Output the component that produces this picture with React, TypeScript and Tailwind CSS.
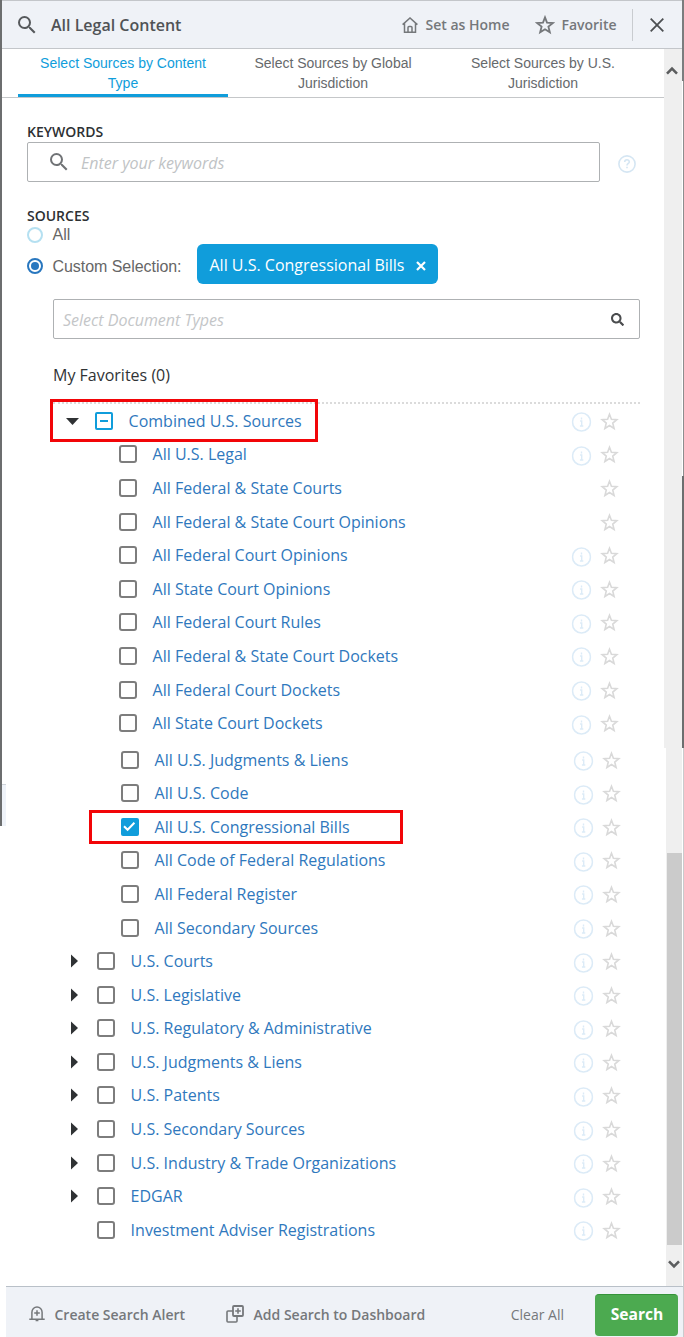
import React from "react";
import { MdSearch } from "react-icons/md";
import { FaSearch } from "react-icons/fa";

const STAR = "M12 2.9 14.4 9.2l6.9.5-5.2 4.3 1.7 6.8-5.8-3.7-5.8 3.7 1.7-6.8-5.2-4.3 6.9-.5Z";

function Star({ className, width }: { className: string; width: number }) {
  return (
    <svg viewBox="0 0 24 24" className={className} fill="none" stroke="currentColor" strokeWidth={width} strokeLinejoin="miter">
      <path d={STAR} />
    </svg>
  );
}

function Info() {
  return (
    <svg viewBox="0 0 20 20" className="size-5 text-[#dcebf7]" fill="none" stroke="currentColor" strokeWidth="1.6">
      <circle cx="10" cy="10" r="9" />
      <path d="M8.6 9h1.6v5M8.4 14h3.4M10 5.6v1.8" strokeWidth="1.4" />
    </svg>
  );
}

function Box({ state }: { state?: "on" | "partial" }) {
  if (state === "on")
    return (
      <span className="flex size-[18px] shrink-0 items-center justify-center rounded-[2px] bg-[#109ddb]">
        <svg viewBox="0 0 18 18" className="size-[18px]" fill="none" stroke="#fff" strokeWidth="2">
          <path d="m3 8.2 3.6 3.6 6.8-7" />
        </svg>
      </span>
    );
  if (state === "partial")
    return (
      <span className="flex size-[18px] shrink-0 items-center justify-center rounded-[2px] border-2 border-[#109ddb]">
        <span className="h-[2px] w-2 bg-[#109ddb]" />
      </span>
    );
  return <span className="size-[18px] shrink-0 rounded-[3px] border-2 border-[#7d7d7d]" />;
}

type Item = {
  label: string;
  parent?: boolean;
  leaf?: boolean;
  open?: boolean;
  noInfo?: boolean;
  state?: "on" | "partial";
  mark?: string;
};

const upper: Item[] = [
  { label: "Combined U.S. Sources", parent: true, open: true, state: "partial", mark: "left-[-3px] top-[-5px] h-[43px] w-[268px]" },
  { label: "All U.S. Legal" },
  { label: "All Federal & State Courts", noInfo: true },
  { label: "All Federal & State Court Opinions", noInfo: true },
  { label: "All Federal Court Opinions" },
  { label: "All State Court Opinions" },
  { label: "All Federal Court Rules" },
  { label: "All Federal & State Court Dockets" },
  { label: "All Federal Court Dockets" },
  { label: "All State Court Dockets" },
];

const lower: Item[] = [
  { label: "All U.S. Judgments & Liens" },
  { label: "All U.S. Code" },
  { label: "All U.S. Congressional Bills", state: "on", mark: "left-[34px] top-0 h-[34px] w-[314px]" },
  { label: "All Code of Federal Regulations" },
  { label: "All Federal Register" },
  { label: "All Secondary Sources" },
  { label: "U.S. Courts", parent: true },
  { label: "U.S. Legislative", parent: true },
  { label: "U.S. Regulatory & Administrative", parent: true },
  { label: "U.S. Judgments & Liens", parent: true },
  { label: "U.S. Patents", parent: true },
  { label: "U.S. Secondary Sources", parent: true },
  { label: "U.S. Industry & Trade Organizations", parent: true },
  { label: "EDGAR", parent: true },
  { label: "Investment Adviser Registrations", parent: true, leaf: true },
];

function Row({ item }: { item: Item }) {
  return (
    <li className="relative flex h-[33.6px] items-center">
      <span className={item.parent ? "flex w-[42px] shrink-0 items-center pl-[13px]" : "w-[66px] shrink-0"}>
        {item.parent && !item.leaf && (
          <svg viewBox="0 0 14 14" className="size-[14px]" fill="#2f3234">
            {item.open ? <path d="M0 4h13L6.5 11Z" /> : <path d="M3 .5v13L10 7Z" />}
          </svg>
        )}
      </span>
      <Box state={item.state} />
      <span className="ml-[15.6px] flex-1">{item.label}</span>
      {!item.noInfo && <span className="mt-[3px] -translate-x-[0.5px]"><Info /></span>}
      <Star className="ml-2 mr-[21px] mt-px size-[19px] text-[#d9d9d9]" width={2} />
      {item.mark && <span className={"absolute border-[3px] border-[#f20508] " + item.mark} />}
    </li>
  );
}

export default function App() {
  return (
    <div className="relative flex h-[1337px] w-[684px] overflow-hidden bg-white font-['Open_Sans','Noto_Sans',sans-serif]">
      <div className="h-[826px] w-[2px] shrink-0 bg-[#6c6e6f]" />
      <div className="absolute left-[2px] top-[784px] h-[42px] w-1 border-t border-[#cfd4da] bg-[#eff3f9]" />
      <div className="flex w-[680px] flex-col">
        <header className="flex h-[49px] w-[680px] shrink-0 items-center border-y border-[#c3c6ca] bg-[#eff2f7] text-[#75787b]">
          <MdSearch className="ml-[13px] size-6 text-[#56595c]" />
          <h1 className="ml-3 flex-1 text-[16px] font-semibold text-[#505356]">All Legal Content</h1>
          <svg viewBox="0 0 16 16" className="size-4" fill="none" stroke="currentColor" strokeWidth="1.5">
            <path d="M.6 7.6 8 1l7.4 6.6M2.5 6v9.3h11V6M6 15v-4.5q0-1 1-1h2q1 0 1 1V15" />
          </svg>
          <span className="ml-[7.5px] text-[14px] font-semibold">Set as Home</span>
          <Star className="ml-[26px] size-[20px]" width={2.2} />
          <span className="ml-[6px] text-[14px] font-semibold">Favorite</span>
          <span className="ml-[15px] h-8 w-px bg-[#c9ccd0]" />
          <svg viewBox="0 0 14 14" className="ml-[17px] mr-[18.4px] size-[14px] text-[#4c4f52]" fill="none" stroke="currentColor" strokeWidth="1.8">
            <path d="m.7.7 12.6 12.6M13.3.7.7 13.3" />
          </svg>
        </header>
        <div className="flex h-[1237px] shrink-0">
          <main className="w-[662px] shrink-0">
            <nav className="flex h-[49px] border-b border-[#c5c7c9] pl-4 text-center font-['Liberation_Sans',Arial,sans-serif] text-[14px] leading-[20px] text-[#66696c]">
              <div className="h-[48px] w-[210px] border-b-[3px] border-[#109ddb] px-5 pt-[4px] text-[#109ddb]">Select Sources by Content Type</div>
              <div className="h-[48px] w-[210px] px-5 pt-[4px]">Select Sources by Global Jurisdiction</div>
              <div className="h-[48px] w-[210px] px-5 pt-[4px]">Select Sources by U.S. Jurisdiction</div>
            </nav>
            <section className="pl-[25px] pt-[24px]">
              <h2 className="h-5 text-[14px] font-semibold leading-[20px] text-[#2d3033]">KEYWORDS</h2>
              <div className="flex items-center">
                <div className="flex h-[40px] w-[573px] items-center rounded-[2px] border border-[#aeb1b3] pl-[19px]">
                  <MdSearch className="size-6 text-[#707376]" />
                  <span className="ml-[10px] pt-[2px] text-[16px] italic text-[#c0c3c5]">Enter your keywords</span>
                </div>
                <svg viewBox="0 0 18 18" className="ml-[18px] mt-1 size-[18px] text-[#d5e6f3]" fill="none" stroke="currentColor" strokeWidth="1.6">
                  <circle cx="9" cy="9" r="8.1" />
                  <path d="M6.7 7.1c0-3 4.6-3 4.6-.2 0 1.6-2.3 1.5-2.3 3.6M9 11.7v1.6" />
                </svg>
              </div>
              <h2 className="mt-[24px] h-5 text-[14px] font-semibold leading-[20px] text-[#2d3033]">SOURCES</h2>
              <div className="flex h-[18px] items-center font-['Liberation_Sans',Arial,sans-serif] text-[16px] text-[#666]">
                <span className="size-4 rounded-full border-2 border-[#b5e0f1]" />
                <span className="ml-[9.5px]">All</span>
              </div>
              <div className="flex h-[40px] items-center font-['Liberation_Sans',Arial,sans-serif] text-[16px] text-[#666]">
                <span className="mt-[4px] flex size-4 items-center justify-center rounded-full border-2 border-[#2877bf]">
                  <span className="size-2 rounded-full bg-[#2877bf]" />
                </span>
                <span className="ml-[9.5px] w-[144.5px] pt-[5px] tracking-[-0.05px]">Custom Selection:</span>
                <span className="flex h-[40px] w-[241px] items-center rounded-[6px] bg-[#109ddb] pl-[12.5px] pt-[2px] font-['Open_Sans',sans-serif] text-white">
                  All U.S. Congressional Bills
                  <svg viewBox="0 0 10 10" className="ml-[11.5px] mt-[2px] size-[10px]" stroke="#fff" strokeWidth="2.2"><path d="m1 1 8 8M9 1 1 9" /></svg>
                </span>
              </div>
            </section>
            <section className="pl-[51px] pt-[15px]">
              <div className="flex h-[40px] w-[587px] items-center justify-between rounded-[2px] border border-[#aeb1b3] pl-[9px] pr-[15.5px]">
                <span className="pt-[2px] text-[16px] italic text-[#c4c6c8]">Select Document Types</span>
                <FaSearch className="size-[13px] text-[#4a4c4e]" />
              </div>
              <h3 className="mt-[24px] h-[24px] text-[16px] leading-[24px] text-[#303335]">My Favorites (0)</h3>
              <div className="mt-[15px] h-[2px] w-[587px] border-t-2 border-dotted border-[#dbdbdb]" />
              <ul className="w-[587px] text-[16px] text-[#2f78bd]">
                {upper.map((i) => <Row key={i.label} item={i} />)}
              </ul>
              <ul className="ml-[2px] mt-[2.8px] w-[587px] text-[16px] text-[#2f78bd]">
                {lower.map((i) => <Row key={i.label} item={i} />)}
              </ul>
            </section>
          </main>
          <aside className="flex w-[18px] shrink-0 flex-col">
            <div className="flex h-[699px] shrink-0 justify-center bg-[#efefef] pt-[17px]">
              <svg viewBox="0 0 12 9" className="ml-[-2px] h-[9px] w-3" fill="none" stroke="#5b5d5e" strokeWidth="2.6"><path d="m1 7.6 5-5 5 5" /></svg>
            </div>
            <div className="ml-[2px] h-[105px] shrink-0 bg-[#efefef]" />
            <div className="ml-[2px] h-[392px] shrink-0 border-l border-[#efefef] bg-[#cbcbcb]" />
            <div className="ml-[2px] flex flex-1 justify-center bg-[#efefef] pt-[15px]">
              <svg viewBox="0 0 12 9" className="ml-[-1px] h-[9px] w-3" fill="none" stroke="#5b5d5e" strokeWidth="2.6"><path d="m1 1.4 5 5 5-5" /></svg>
            </div>
          </aside>
        </div>
        <footer className="ml-1 flex h-[51px] w-[677px] shrink-0 items-center border-t border-[#b9c0c8] bg-[#eff2f7] pt-[4px] text-[14px] font-semibold text-[#75787b]">
          <svg viewBox="0 0 16 16" className="ml-[23px] size-4" fill="none" stroke="currentColor" strokeWidth="1.5">
            <path d="M.3 13.2h15.4M2.9 13V6.2a5.1 5.1 0 0 1 10.2 0V13M6.6 14.5h2.8M8 4.2v5.6M5.2 7h5.6" />
          </svg>
          <span className="ml-[9.5px]">Create Search Alert</span>
          <svg viewBox="0 0 18 18" className="ml-[41px] size-[18px]" fill="none" stroke="currentColor" strokeWidth="1.8">
            <rect x="7" y="1" width="10" height="10" rx="1" />
            <path d="M7 6H2q-1 0-1 1v9q0 1 1 1h8q1 0 1-1v-5M12 3.2v5.6M9.2 6h5.6" strokeWidth="1.6" />
          </svg>
          <span className="ml-[9.5px] flex-1">Add Search to Dashboard</span>
          <span className="mr-[31px] font-normal">Clear All</span>
          <button className="mr-[5px] mt-[1px] h-[42px] w-[83px] rounded-[4px] border-t border-[#35933a] bg-[#4caa50] pb-[1px] pl-px font-['Open_Sans',sans-serif] text-[15.6px] font-bold text-white">Search</button>
        </footer>
      </div>
      <div className="flex w-[2px] flex-col items-end">
        <div className="h-[81px] w-[2px] bg-[#7b7d7e]" />
        <div className="h-[395px] w-px bg-[#8c8e8f]" />
        <div className="h-[272px] w-[2px] bg-[#6c6e6f]" />
        <div className="w-px flex-1 bg-[#c9cbcd]" />
      </div>
    </div>
  );
}
